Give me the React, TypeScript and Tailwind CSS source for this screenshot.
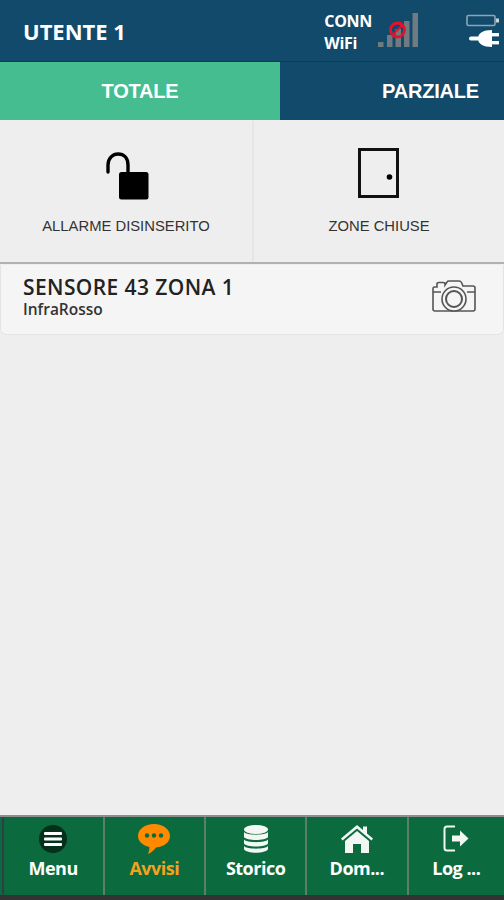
const sans = "font-['Liberation_Sans',Arial,sans-serif]";
const open = "font-['Open_Sans','Noto_Sans',sans-serif]";

function Signal() {
  return (
    <svg width="42" height="36" viewBox="0 0 42 36" className="block">
      <rect x="1" y="29" width="5.5" height="5" fill="#6f7b80" />
      <rect x="10" y="22" width="5.5" height="12" fill="#6f7b80" />
      <rect x="18.5" y="16" width="5.5" height="18" fill="#6f7b80" />
      <rect x="27" y="8" width="5.5" height="26" fill="#6f7b80" />
      <rect x="35.5" y="0" width="5.5" height="34" fill="#6f7b80" />
      <circle cx="20.5" cy="17" r="7" fill="none" stroke="#e8102a" strokeWidth="2.8" />
      <path d="M15.5 22 L25.5 12" stroke="#e8102a" strokeWidth="2" />
    </svg>
  );
}

function Power() {
  return (
    <svg width="34" height="34" viewBox="0 0 34 34" className="block">
      <rect x="1" y="1.5" width="28" height="10" rx="1.5" fill="none" stroke="#8fa5b3" strokeWidth="1.6" />
      <rect x="30" y="4.5" width="3" height="4" fill="#c9d3da" />
      <rect x="3" y="22.5" width="11" height="4" rx="2" fill="#fff" />
      <path d="M26 16 C17 16 12 19 12 24.5 C12 30 17 33 26 33 Z" fill="#fff" />
      <rect x="25" y="19" width="8" height="3.4" fill="#fff" />
      <rect x="25" y="27" width="8" height="3.4" fill="#fff" />
    </svg>
  );
}

function Lock() {
  return (
    <svg width="44" height="48" viewBox="0 0 44 48" className="block">
      <path d="M2 20 V13 C2 6 7 2 12 2 C18 2 22 6 22 13 V21" fill="none" stroke="#000" strokeWidth="3.4" strokeLinecap="round" />
      <rect x="13" y="20" width="29.5" height="27.5" rx="2.5" fill="#000" />
    </svg>
  );
}

function Door() {
  return (
    <svg width="42" height="50" viewBox="0 0 42 50" className="block">
      <rect x="1.5" y="1.5" width="38" height="47" fill="none" stroke="#111" strokeWidth="3" />
      <circle cx="31.5" cy="29" r="2.8" fill="#000" />
    </svg>
  );
}

function CameraIcon() {
  return (
    <svg width="44" height="36" viewBox="0 0 44 36" className="block" fill="none" stroke="#555" strokeWidth="1.6">
      <path d="M2.5 7 H5 V4 C5 3 6 2.5 7 2.5 H11 C12 2.5 13 3 13 4 V5 L15 2 C15.5 1.2 16.5 1 17 1 H27 C28 1 29 1.5 29.5 2.5 L31 6 H41 C42 6 43 7 43 8 V29 C43 30 42 31 41 31 H3 C2 31 1 30 1 29 V8.5 C1 7.5 1.5 7 2.5 7 Z" />
      <circle cx="22" cy="19" r="12" fill="#f5f5f5" />
      <circle cx="22" cy="19" r="8" strokeWidth="2" />
      <path d="M1 12 H9 M35 12 H43" />
    </svg>
  );
}

function MenuIcon() {
  return (
    <svg width="30" height="30" viewBox="0 0 30 30" className="block">
      <circle cx="15" cy="15" r="14" fill="#05301c" />
      <rect x="6" y="8" width="18" height="3" rx="1" fill="#fff" />
      <rect x="6" y="13.5" width="18" height="3" rx="1" fill="#fff" />
      <rect x="6" y="19" width="18" height="3" rx="1" fill="#fff" />
    </svg>
  );
}

function Chat() {
  return (
    <svg width="32" height="30" viewBox="0 0 32 30" className="block">
      <path d="M16 0 C25 0 32 5 32 12 C32 18 26 23 18 23.5 C16 26 13 29 10 30 C11 27.5 11.5 25.5 11.3 23 C5 21.5 0 17.5 0 12 C0 5 7 0 16 0 Z" fill="#ff8a00" />
      <circle cx="9" cy="11.5" r="2.2" fill="#0b6b3f" />
      <circle cx="16" cy="11.5" r="2.2" fill="#0b6b3f" />
      <circle cx="23" cy="11.5" r="2.2" fill="#0b6b3f" />
    </svg>
  );
}

function Database() {
  return (
    <svg width="24" height="28" viewBox="0 0 24 28" className="block" fill="#f2f7f4">
      <ellipse cx="12" cy="4.5" rx="12" ry="4.5" />
      <path d="M0 7 C2 10.5 22 10.5 24 7 V12 C22 16 2 16 0 12 Z" />
      <path d="M0 14.5 C2 18 22 18 24 14.5 V18.5 C22 22.5 2 22.5 0 18.5 Z" />
      <path d="M0 21 C2 24.5 22 24.5 24 21 V24 C22 29 2 29 0 24 Z" />
    </svg>
  );
}

function Home() {
  return (
    <svg width="32" height="28" viewBox="0 0 32 28" className="block" fill="#f2f7f4">
      <path d="M16 0 L22 5 V1.5 H26 V8.5 L32 13.5 L30.5 15.5 L16 3.5 L1.5 15.5 L0 13.5 Z" />
      <path d="M16 6 L28 16 V28 H20 V19 H12 V28 H4 V16 Z" />
    </svg>
  );
}

function Logout() {
  return (
    <svg width="26" height="28" viewBox="0 0 26 28" className="block">
      <path d="M12 1.5 H4 C2.5 1.5 1.5 2.5 1.5 4 V23 C1.5 24.5 2.5 25.5 4 25.5 H12" fill="none" stroke="#f2f7f4" strokeWidth="2" />
      <path d="M9 10.5 H17 V5.5 L25.5 13.5 L17 21.5 V16.5 H9 Z" fill="#f2f7f4" />
    </svg>
  );
}

const tabs = [
  { label: "Menu", icon: <MenuIcon />, color: "text-white", cell: "w-[101.25px] border-[#2f3f4a]" },
  { label: "Avvisi", icon: <Chat />, color: "text-[#f5a21b]", cell: "w-[101.25px] border-[#5c7f6c]" },
  { label: "Storico", icon: <Database />, color: "text-white", cell: "w-[101.25px] border-[#5c7f6c]" },
  { label: "Dom...", icon: <Home />, color: "text-white", cell: "w-[101.25px] border-[#5c7f6c]" },
  { label: "Log ...", icon: <Logout />, color: "text-white", cell: "flex-1 border-[#5c7f6c]" },
];

export default function App() {
  return (
    <div className={`flex h-[900px] w-[504px] flex-col overflow-hidden bg-[#eeeeee] ${sans}`}>
      <header className="flex h-[62px] items-center border-b border-[#0d3a5e] bg-[#114a6b] pl-[23px] pr-[4px]">
        <span className={`${open} mt-[2px] text-[22px] font-bold text-white`}>UTENTE 1</span>
        <div className={`${open} ml-auto mt-[2px] text-[16px] font-bold leading-[22px] tracking-[-0.3px] text-white`}>
          <div>CONN</div>
          <div>WiFi</div>
        </div>
        <div className="ml-[5px]"><Signal /></div>
        <div className="ml-[47px]"><Power /></div>
      </header>
      <nav className="flex h-[58px] bg-[#114a6b] text-[20px] font-bold tracking-[-0.2px] text-white">
        <div className="flex w-[280px] items-center justify-center bg-[#45bd91]">TOTALE</div>
        <div className="flex flex-1 items-center justify-end pr-[25px]">PARZIALE</div>
      </nav>
      <section className="mt-[1px] flex h-[143px] border-b-2 border-[#aeb2b2] text-[14.8px] text-[#333]">
        <div className="flex w-[254px] flex-col items-center border-r-2 border-[#e6e6e6] pt-[31px]">
          <div className="ml-[3px]"><Lock /></div>
          <div className="mt-[15px]">ALLARME DISINSERITO</div>
        </div>
        <div className="flex flex-1 flex-col items-center pt-[27px]">
          <Door />
          <div className="mt-[17px]">ZONE CHIUSE</div>
        </div>
      </section>
      <article className={`${open} mt-[1px] flex h-[70px] items-center rounded-b-[6px] border-x border-b border-[#e4e4e4] bg-[#f5f5f5] pb-[4px] pl-[22px] pr-[27px]`}>
        <div className="flex flex-col gap-[1px]">
          <div className="text-[21px] font-semibold leading-[22px] tracking-[0.4px] text-[#222]">SENSORE 43 ZONA 1</div>
          <div className="text-[15.5px] font-semibold leading-[20px] text-[#333]">InfraRosso</div>
        </div>
        <div className="ml-auto"><CameraIcon /></div>
      </article>
      <div className="flex-1" />
      <footer className={`${open} flex h-[85px] border-t-2 border-[#8c8f8c] bg-[#333] pb-[5px]`}>
        <div className="w-[1.5px] shrink-0 bg-[#0b6b3f]" />
        {tabs.map((t) => (
          <div
            key={t.label}
            className={`flex flex-col items-center border-l-2 bg-[#0b6b3f] pt-[6px] ${t.cell}`}
          >
            <div className="flex h-[32px] items-center justify-center">{t.icon}</div>
            <div className={`mt-[1px] text-[18px] font-bold leading-[24px] tracking-[-0.5px] ${t.color}`}>{t.label}</div>
          </div>
        ))}
      </footer>
    </div>
  );
}
